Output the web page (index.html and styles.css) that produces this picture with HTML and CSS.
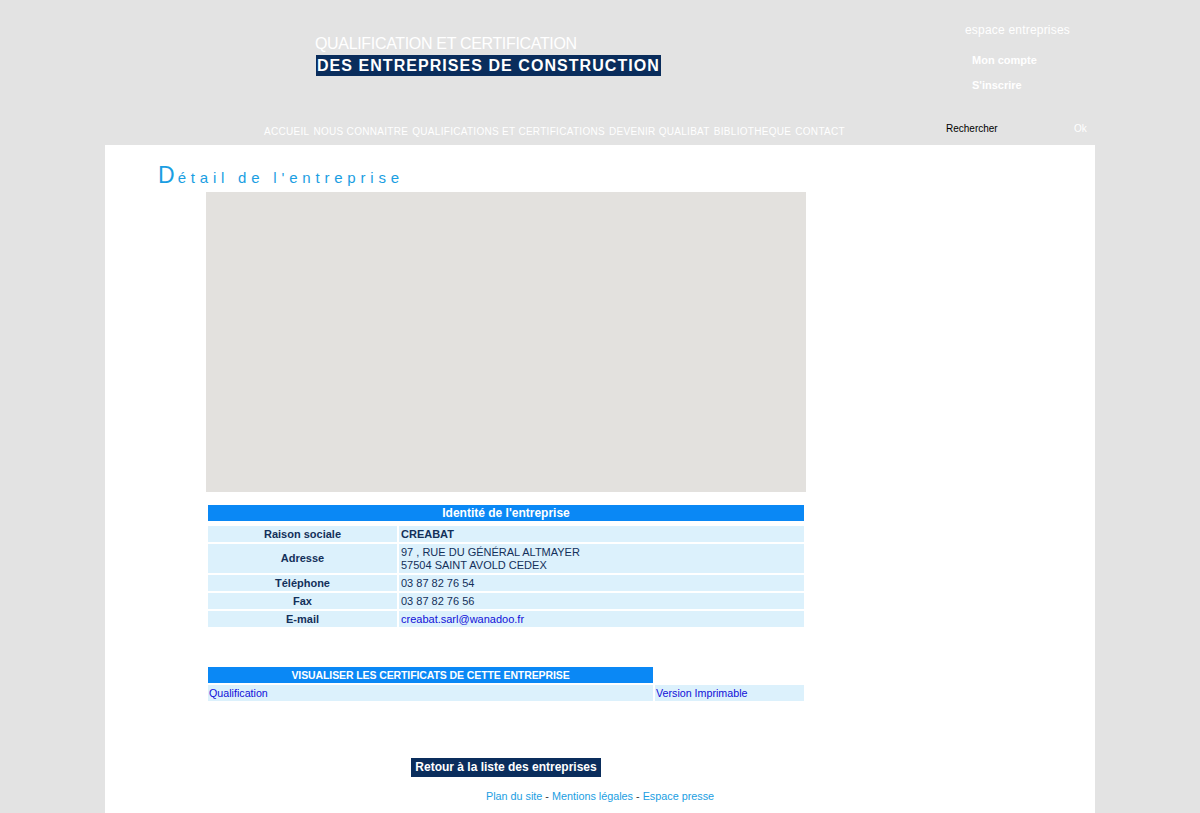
FILE: index.html
```html
<!DOCTYPE html>
<html lang="fr">
<head>
<meta charset="utf-8">
<title>Détail de l'entreprise</title>
<link rel="stylesheet" href="styles.css">
</head>
<body>
<div class="wrapper">
  <header class="header">
    <div class="header-top">
      <div class="brand">
        <div class="brand-line1">QUALIFICATION ET CERTIFICATION</div>
        <div class="brand-line2">DES ENTREPRISES DE CONSTRUCTION</div>
      </div>
      <div class="account">
        <div class="account-title">espace entreprises</div>
        <a class="account-link" href="#">Mon compte</a>
        <a class="account-link" href="#">S'inscrire</a>
      </div>
    </div>
    <div class="header-bottom">
      <nav class="nav">
        <a href="#">ACCUEIL</a>
        <a href="#">NOUS CONNAITRE</a>
        <a href="#">QUALIFICATIONS ET CERTIFICATIONS</a>
        <a href="#">DEVENIR QUALIBAT</a>
        <a href="#">BIBLIOTHEQUE</a>
        <a href="#">CONTACT</a>
      </nav>
      <form class="search">
        <span class="search-input">Rechercher</span>
        <span class="search-ok">Ok</span>
      </form>
    </div>
  </header>

  <main class="content">
    <h1 class="page-title"><span class="cap">D</span>étail de l'entreprise</h1>
    <div class="main-col">
      <div class="map"></div>

      <table class="info">
        <tr><th colspan="2" class="head info-head">Identité de l'entreprise</th></tr>
        <tr><td class="label">Raison sociale</td><td class="value strong">CREABAT</td></tr>
        <tr class="tall"><td class="label">Adresse</td><td class="value">97 , RUE DU GÉNÉRAL ALTMAYER<br>57504 SAINT AVOLD CEDEX</td></tr>
        <tr><td class="label">Téléphone</td><td class="value">03 87 82 76 54</td></tr>
        <tr><td class="label">Fax</td><td class="value">03 87 82 76 56</td></tr>
        <tr><td class="label">E-mail</td><td class="value"><a href="#" class="link">creabat.sarl@wanadoo.fr</a></td></tr>
      </table>

      <table class="certs">
        <tr><th class="head certs-head">VISUALISER LES CERTIFICATS DE CETTE ENTREPRISE</th><td class="blank"></td></tr>
        <tr><td class="cert-cell"><a href="#" class="link">Qualification</a></td><td class="cert-cell print"><a href="#" class="link">Version Imprimable</a></td></tr>
      </table>

      <div class="back-row">
        <a href="#" class="back-btn">Retour à la liste des entreprises</a>
      </div>
    </div>
    <footer class="footer">
      <a href="#">Plan du site</a> - <a href="#">Mentions légales</a> - <a href="#">Espace presse</a>
    </footer>
  </main>
</div>
</body>
</html>
```

FILE: styles.css
```css
html, body {
  margin: 0;
  padding: 0;
}
body {
  background: #e3e3e3;
  font-family: "Liberation Sans", Arial, sans-serif;
  color: #13305a;
}
a { text-decoration: none; }

.wrapper {
  width: 990px;
  margin: 0 auto;
}

/* Header */
.header {
  height: 145px;
  display: flex;
  flex-direction: column;
}
.header-top {
  display: flex;
  height: 118px;
}
.brand {
  margin-left: 210px;
  width: 650px;
  padding-top: 35px;
  box-sizing: border-box;
}
.brand-line1 {
  color: #ffffff;
  font-size: 16px;
  line-height: 18px;
  letter-spacing: -0.33px;
}
.brand-line2 {
  display: inline-block;
  margin-top: 2px;
  margin-left: 1px;
  background: #0a2d5c;
  color: #ffffff;
  font-weight: bold;
  font-size: 16px;
  line-height: 21px;
  padding: 0 1px 0 1px;
  letter-spacing: 1.05px;
}
.account {
  padding-top: 23px;
  display: flex;
  flex-direction: column;
}
.account-title {
  color: #ffffff;
  font-size: 12px;
  line-height: 14px;
  margin-bottom: 16px;
  letter-spacing: 0.2px;
}
.account-link {
  color: #ffffff;
  font-weight: bold;
  font-size: 11px;
  line-height: 14px;
  margin-left: 7px;
  margin-bottom: 11px;
}

.header-bottom {
  display: flex;
  align-items: center;
  height: 27px;
}
.nav {
  margin-left: 159px;
  width: 682px;
  display: flex;
  gap: 4px;
}
.nav a {
  color: #ffffff;
  font-size: 10px;
  line-height: 12px;
  letter-spacing: 0.3px;
}
.search {
  margin: 0;
  display: flex;
  align-items: center;
  margin-top: -7px;
}
.search-input {
  color: #000000;
  font-size: 10px;
  width: 128px;
}
.search-ok {
  color: #ffffff;
  font-size: 10px;
}

/* Content */
.content {
  background: #ffffff;
  min-height: 700px;
  padding-top: 17px;
}
.page-title {
  margin: 0 0 0 53px;
  font-weight: normal;
  font-size: 15px;
  line-height: 26px;
  letter-spacing: 4.8px;
  color: #1a9ee2;
}
.page-title .cap {
  font-size: 23px;
  letter-spacing: 3px;
}
.main-col {
  width: 600px;
  margin-left: 101px;
  padding-top: 1px;
}
.map {
  height: 300px;
  background: #e3e1de;
}

.info, .certs {
  width: 600px;
  border-spacing: 2px;
  font-size: 11px;
}
.info {
  margin-top: 11px;
}
.head {
  background: #0a88f5;
  color: #ffffff;
  font-weight: bold;
  font-size: 12px;
  height: 16px;
  padding: 0;
  line-height: 14px;
  text-align: center;
}
.info-head {
  border-bottom: 3px solid #ffffff;
}
.info td {
  background: #dcf1fc;
  height: 16px;
  padding: 0 2px;
  line-height: 13px;
}
.info tr.tall td {
  height: 29px;
}
.label {
  width: 185px;
  text-align: center;
  font-weight: bold;
}
.value.strong {
  font-weight: bold;
}
.link {
  color: #1010d8;
}

.certs {
  margin-top: 36px;
}
.certs-head {
  width: 445px;
  font-size: 10.5px;
  letter-spacing: -0.1px;
}
.blank {
  background: #ffffff;
}
.cert-cell {
  background: #dcf1fc;
  height: 16px;
  padding: 0 1px;
  font-size: 10.7px;
  line-height: 13px;
}

.back-row {
  display: flex;
  justify-content: center;
  margin-top: 55px;
}
.back-btn {
  display: block;
  width: 190px;
  height: 19px;
  line-height: 19px;
  text-align: center;
  background: #0a2d5c;
  color: #ffffff;
  font-weight: bold;
  font-size: 12px;
}

.footer {
  text-align: center;
  margin-top: 12px;
  font-size: 10.8px;
  line-height: 14px;
  color: #333333;
}
.footer a {
  color: #1a9ee2;
}
```
